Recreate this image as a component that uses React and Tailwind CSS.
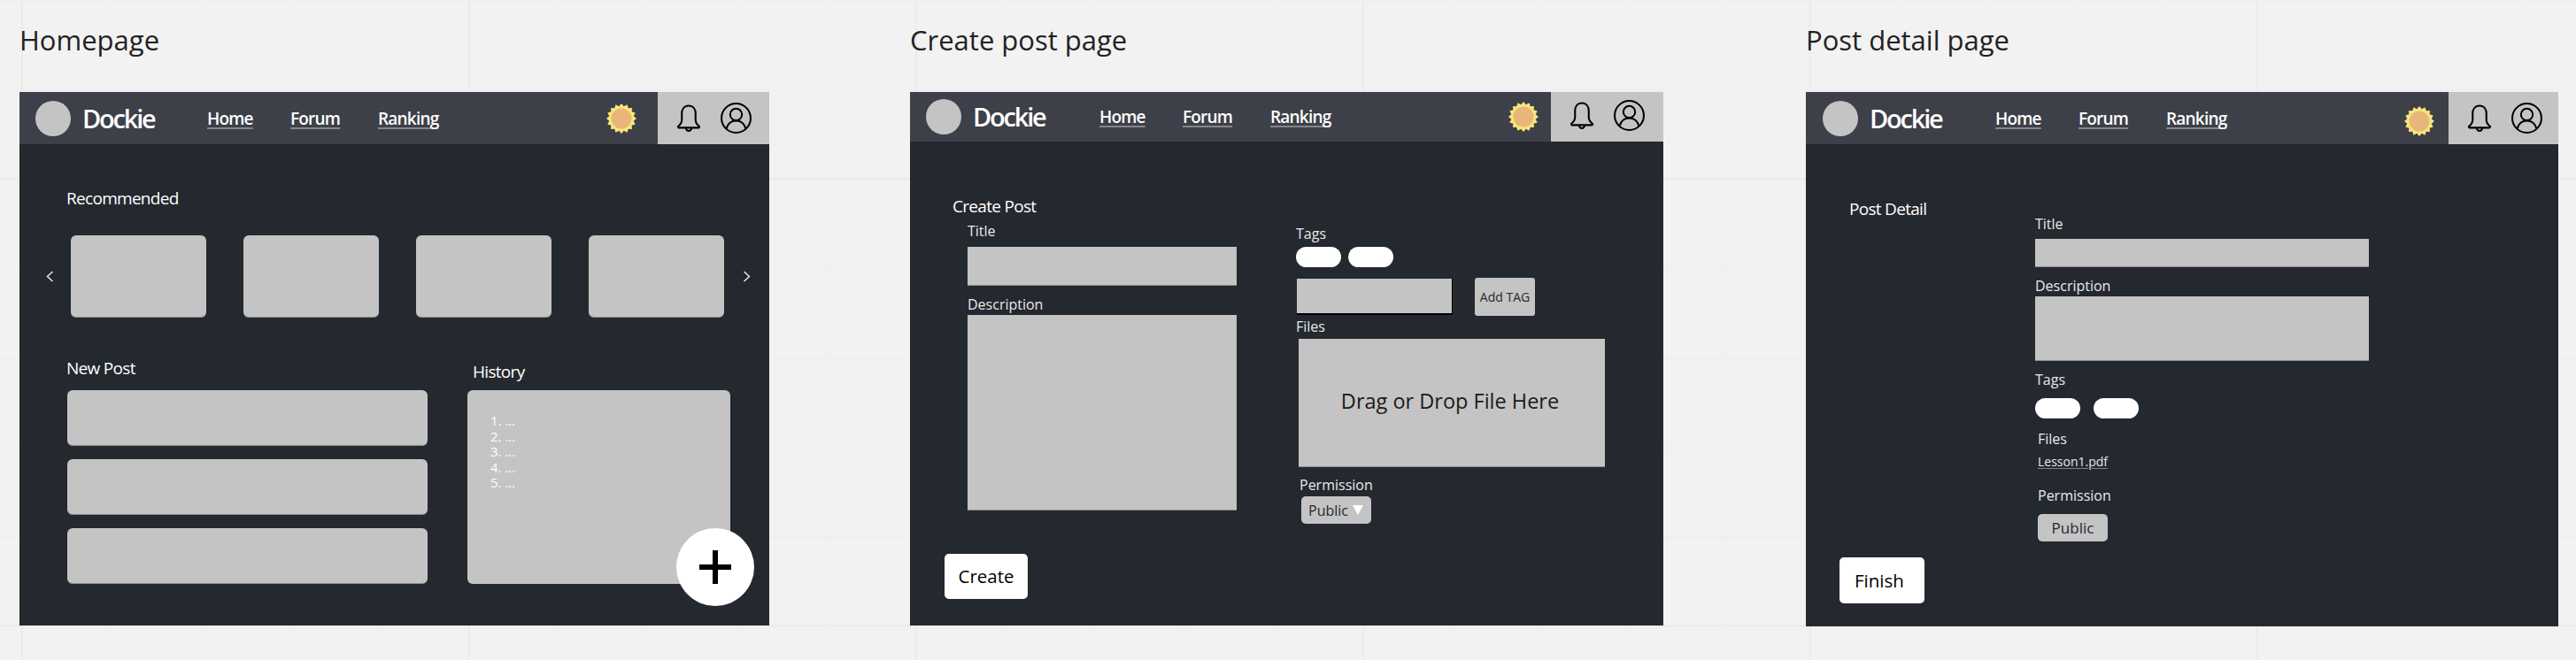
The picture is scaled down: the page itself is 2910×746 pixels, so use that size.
import React from 'react';

function Sun() {
    const points = [];
    for (let i = 0; i < 32; i++) {
        const r = i % 2 === 0 ? 17 : 14;
        const a = (i / 32) * Math.PI * 2;
        points.push(`${17 + r * Math.sin(a)},${17 - r * Math.cos(a)}`);
    }
    return (
        <svg width="34" height="34" viewBox="0 0 34 34" className="block">
            <polygon points={points.join(' ')} fill="#f8e67c" />
            <circle cx="17" cy="17" r="11.5" fill="#e8b67b" />
        </svg>
    );
}

function Bell() {
    return (
        <svg width="28" height="31" viewBox="0 0 27 30" fill="none" stroke="#000" strokeWidth="2" strokeLinejoin="round">
            <path d="M13.5 1.5c-5 0-7.500 4-7.500 8.500v7c0 3-1.500 5-4 7a1 1 0 0 0 .5 1.500h22a1 1 0 0 0 .5-1.500c-2.500-2-4-4-4-7v-7c0-4.500-2.500-8.500-7.500-8.500z" />
            <path d="M10.500 26a3 3 0 0 0 6 0" />
        </svg>
    );
}

function UserIcon() {
    return (
        <svg width="35" height="35" viewBox="0 0 34 34" fill="none" stroke="#000" strokeWidth="2">
            <circle cx="17" cy="17" r="16" />
            <circle cx="17" cy="13" r="6.500" />
            <path d="M6.500 28.500c1.500-5.500 5.500-8.500 10.500-8.500s9 3 10.500 8.500" />
        </svg>
    );
}

function Chevron({ dir }) {
    return (
        <svg width="9" height="13" viewBox="0 0 9 13" fill="none" stroke="#e8e8e8" strokeWidth="1.500">
            <path d={dir === 'left' ? 'M7.500 1L1.500 6.500L7.500 12' : 'M1.500 1L7.500 6.500L1.500 12'} />
        </svg>
    );
}

function NavLink({ className, children }) {
    return (
        <span className={`text-[19px] leading-[24px] text-white font-semibold tracking-[-0.8px] whitespace-nowrap underline decoration-2 decoration-[#83868c] underline-offset-[3px] [text-decoration-skip-ink:none] ${className}`}>
            {children}
        </span>
    );
}

function Header({ h, pad, navGap, sunGap, sunShift, blockW, up }) {
    return (
        <div className={`flex items-center bg-[#3d4048] ${h}`}>
            <div className={`flex items-center ${pad}`}>
                <div className="w-10 h-10 rounded-full bg-[#c4c4c4]" />
                <span className="ml-[13px] w-[76px] whitespace-nowrap text-[29px] leading-[36px] font-semibold tracking-[-2.200px] text-white">Dockie</span>
            </div>
            <nav className={`flex items-center gap-[45px] ${navGap}`}>
                <NavLink className="w-[49px]">Home</NavLink>
                <NavLink className="w-[54px]">Forum</NavLink>
                <NavLink className="w-[67px]">Ranking</NavLink>
            </nav>
            <div className={`ml-auto ${sunGap} ${sunShift}`}>
                <Sun />
            </div>
            <div className={`self-stretch bg-[#c4c4c4] flex items-center pl-[21px] gap-[22px] ${blockW} ${up}`}>
                <Bell />
                <UserIcon />
            </div>
        </div>
    );
}

function Box({ className }) {
    return <div className={`bg-[#c4c4c4] border-b border-[#8e9094] ${className}`} />;
}

function Pill() {
    return <div className="w-[51px] h-[23px] rounded-full bg-white" />;
}

function Label({ className = '', children }) {
    return <div className={`text-[16px] leading-[20px] text-[#e9e9e9] ${className}`}>{children}</div>;
}

function Heading({ className = '', children }) {
    return <div className={`text-[19px] leading-[24px] text-white font-medium tracking-[-0.7px] ${className}`}>{children}</div>;
}

function Homepage() {
    return (
        <div className="relative w-[847px] h-[603px] bg-[#24282f]">
            <Header h="h-[59px]" pad="pl-[18px]" navGap="ml-[65px]" sunGap="mr-[24px]" sunShift="" blockW="w-[126px]" up="pb-[1px]" />
            <div className="pt-[49px]">
                <Heading className="pl-[53px]">Recommended</Heading>
                <div className="mt-[30px] pl-[30px] flex items-center">
                    <Chevron dir="left" />
                    <div className="ml-[19px] flex gap-[42px]">
                        {[0, 1, 2, 3].map(i => (
                            <Box key={i} className="w-[153px] h-[93px] rounded-[6px]" />
                        ))}
                    </div>
                    <div className="ml-[21px]"><Chevron dir="right" /></div>
                </div>
                <div className="flex pl-[54px] gap-[45px]">
                    <div className="w-[407px]">
                        <Heading className="mt-[45px] mb-[13px] -ml-px">New Post</Heading>
                        <div className="flex flex-col gap-[15px]">
                            {[0, 1, 2].map(i => (
                                <Box key={i} className="h-[63px] rounded-[6px]" />
                            ))}
                        </div>
                    </div>
                    <div className="w-[297px]">
                        <Heading className="mt-[49px] mb-[9px] ml-[6px]">History</Heading>
                        <div className="h-[219px] rounded-[6px] bg-[#c4c4c4] pt-[26px] pl-[26px] text-[15px] leading-[17.6px] text-white">
                            {[1, 2, 3, 4, 5].map(n => (
                                <div key={n}>{n}. ...</div>
                            ))}
                        </div>
                    </div>
                </div>
            </div>
            <div className="absolute right-[17px] bottom-[22px] w-[88px] h-[88px] rounded-full bg-white flex items-center justify-center">
                <svg width="36" height="38" viewBox="0 0 36 38" fill="#000">
                    <rect x="15" y="0" width="6" height="38" />
                    <rect x="0" y="16" width="36" height="6" />
                </svg>
            </div>
        </div>
    );
}

function CreatePost() {
    return (
        <div className="w-[851px] h-[603px] bg-[#24282f]">
            <Header h="h-[56px]" pad="pl-[18px]" navGap="ml-[67px]" sunGap="mr-[14px]" sunShift="" blockW="w-[127px]" up="pb-[4px]" />
            <div className="pt-[61px]">
                <Heading className="pl-[48px]">Create Post</Heading>
                <div className="flex pl-[65px]">
                    <div className="w-[304px]">
                        <Label className="mt-[6px]">Title</Label>
                        <Box className="mt-[8px] h-[44px]" />
                        <Label className="mt-[11px]">Description</Label>
                        <Box className="mt-[2px] h-[221px]" />
                    </div>
                    <div className="ml-[67px]">
                        <Label className="mt-[9px]">Tags</Label>
                        <div className="mt-[5px] flex gap-[8px]">
                            <Pill />
                            <Pill />
                        </div>
                        <div className="mt-[12px] flex items-center h-[43px]">
                            <div className="ml-px w-[176px] h-[41px] bg-[#c4c4c4] border-b-2 border-r border-black" />
                            <div className="ml-[25px] w-[68px] h-[43px] rounded-[3px] bg-[#c4c4c4] flex items-center justify-center text-[14px] text-[#24282f]">
                                Add TAG
                            </div>
                        </div>
                        <Label className="mt-[2px]">Files</Label>
                        <div className="mt-[4px] ml-[3px] w-[346px] h-[145px] bg-[#c4c4c4] border-b border-[#8e9094] flex items-center justify-center pr-[4px] pb-[2px] text-[23.500px] text-[#1a1a1a]">
                            Drag or Drop File Here
                        </div>
                        <Label className="mt-[10px] ml-[4px]">Permission</Label>
                        <div className="mt-[3px] ml-[6px] w-[79px] h-[31px] rounded-[5px] bg-[#c4c4c4] flex items-center pl-[8px] text-[16px] text-[#24282f]">
                            Public
                            <svg width="12" height="11" viewBox="0 0 12 11" className="ml-[5px]" fill="#fff">
                                <polygon points="0,0 12,0 6,11" />
                            </svg>
                        </div>
                    </div>
                </div>
                <button className="mt-[34px] block ml-[39px] w-[94px] h-[51px] rounded-[5px] bg-white text-[20.500px] text-black">
                    Create
                </button>
            </div>
        </div>
    );
}

function PostDetail() {
    return (
        <div className="w-[850px] h-[604px] bg-[#24282f] flex flex-col">
            <Header h="h-[59px]" pad="pl-[19px]" navGap="ml-[66px]" sunGap="mr-[16px]" sunShift="pt-[6px]" blockW="w-[124px]" up="pb-[1px]" />
            <div className="flex flex-1">
                <div className="w-[259px] pl-[49px] pt-[61px] pb-[26px] flex flex-col justify-between">
                    <Heading>Post Detail</Heading>
                    <button className="-ml-[11px] w-[96px] h-[52px] rounded-[5px] bg-white text-[20.500px] text-black text-left pl-[17px]">
                        Finish
                    </button>
                </div>
                <div className="w-[377px] pt-[80px]">
                    <Label>Title</Label>
                    <Box className="mt-[7px] h-[32px]" />
                    <Label className="mt-[11px]">Description</Label>
                    <Box className="mt-[2px] h-[73px]" />
                    <Label className="mt-[11px]">Tags</Label>
                    <div className="mt-[11px] flex gap-[15px]">
                        <Pill />
                        <Pill />
                    </div>
                    <Label className="mt-[13px] ml-[3px]">Files</Label>
                    <div className="mt-[7px] ml-[3px] text-[14px] leading-[18px] text-[#e9e9e9] underline decoration-[#83868c] underline-offset-[2px]">
                        Lesson1.pdf
                    </div>
                    <Label className="mt-[19px] ml-[3px]">Permission</Label>
                    <div className="mt-[11px] ml-[3px] w-[79px] h-[31px] rounded-[5px] bg-[#c4c4c4] flex items-center justify-center text-[17px] text-[#24282f]">
                        Public
                    </div>
                </div>
            </div>
        </div>
    );
}

function Column({ title, className = '', children }) {
    return (
        <div className={className}>
            <div className="text-[31px] leading-[40px] text-[#222222] mb-[39px]">{title}</div>
            {children}
        </div>
    );
}

export default function App() {
    return (
        <div
            className={`w-[2910px] h-[746px] overflow-hidden flex pl-[22px] pt-[25px] bg-[#f2f2f2] font-["Open_Sans",sans-serif] bg-[linear-gradient(to_right,#ebebeb_2px,transparent_2px),linear-gradient(to_bottom,#ebebeb_2px,transparent_2px),linear-gradient(to_right,#efefef_1px,transparent_1px),linear-gradient(to_bottom,#efefef_2px,transparent_2px)] bg-[size:505px_505px,505px_505px,101px_101px,101px_101px] bg-[position:24px_201px,24px_201px,24px_0px,24px_0px]`}
        >
            <Column title="Homepage">
                <Homepage />
            </Column>
            <Column title="Create post page" className="ml-[159px]">
                <CreatePost />
            </Column>
            <Column title="Post detail page" className="ml-[161px]">
                <PostDetail />
            </Column>
        </div>
    );
}
